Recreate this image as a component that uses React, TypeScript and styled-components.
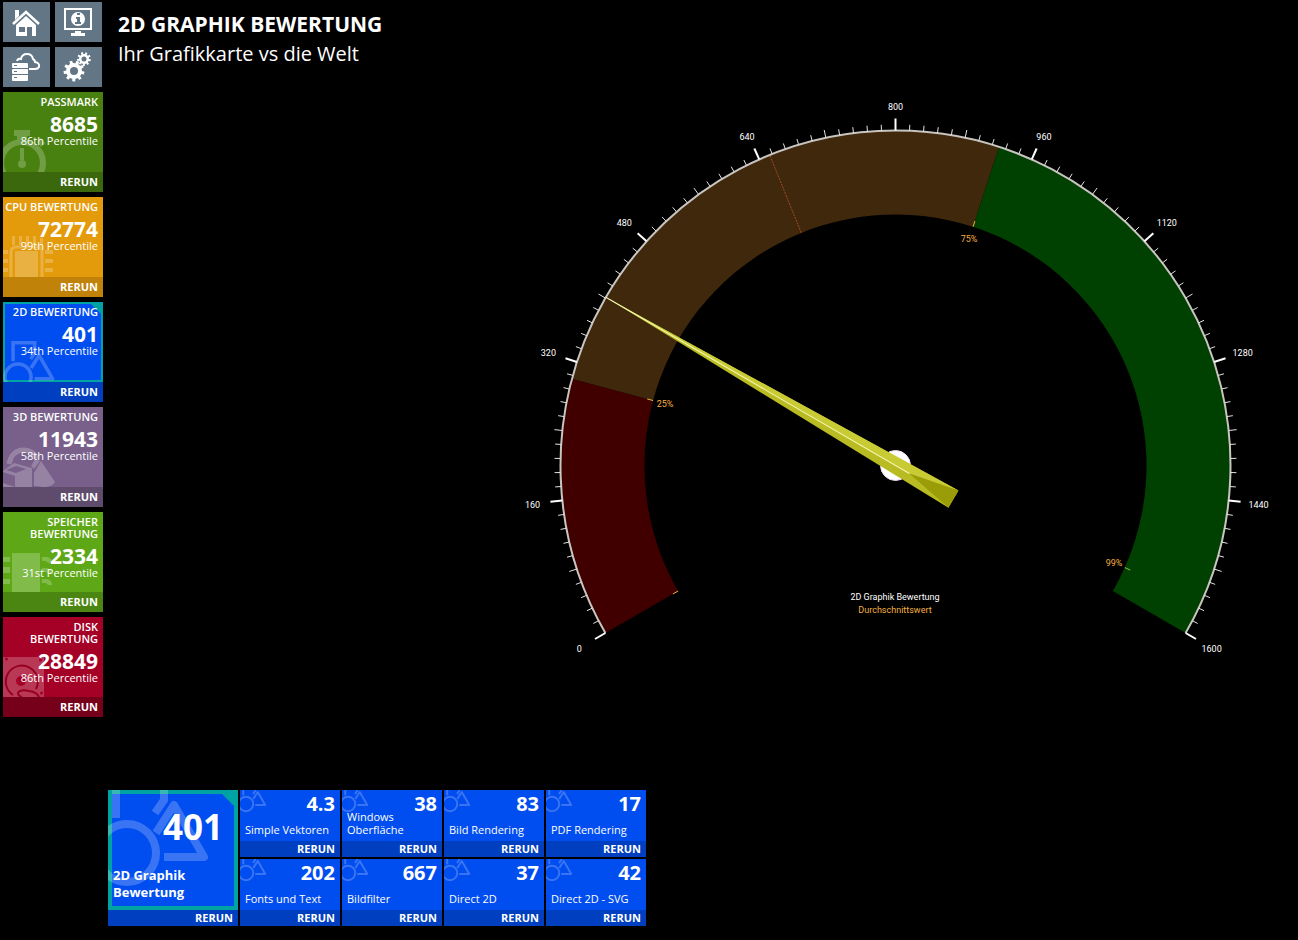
import React from "react";
import styled, { createGlobalStyle, css } from "styled-components";

const GlobalStyle = createGlobalStyle`
  * { box-sizing: border-box; }
  body {
    margin: 0;
    background: #000;
    color: #fff;
    font-family: "Open Sans", "Noto Sans", sans-serif;
  }
  button { font-family: inherit; color: inherit; border: 0; padding: 0; cursor: pointer; }
  a { color: inherit; text-decoration: none; }
  h1, h2, p { margin: 0; }
`;

const Page = styled.div`
  display: flex;
  gap: 5px;
  min-height: 100vh;
`;

const Sidebar = styled.nav`
  display: flex;
  flex-direction: column;
  flex: none;
  gap: 5px;
  width: 103px;
  padding: 2px 0 5px 3px;
`;

const Toolbar = styled.div`
  display: grid;
  grid-template-columns: 47px 47px;
  gap: 5px;
`;

const ToolButton = styled.button`
  display: flex;
  height: 40px;
  background: #627686;
  svg { width: 47px; height: 40px; }
`;

const Tile = styled.article`
  display: flex;
  flex-direction: column;
`;

const selectedFrame = css<{ $edge: number; $corner: number }>`
  &::before {
    content: "";
    position: absolute;
    inset: 0;
    border: ${(p) => p.$edge}px solid #00a3a3;
  }
  &::after {
    content: "";
    position: absolute;
    top: 0;
    right: 0;
    width: ${(p) => p.$corner}px;
    height: ${(p) => p.$corner}px;
    background: #00a3a3;
    clip-path: polygon(0 0, 100% 0, 100% 100%);
  }
`;

const TileBody = styled.a<{ $bg: string; $selected?: boolean; $edge: number; $corner: number }>`
  position: relative;
  display: flex;
  flex-direction: column;
  overflow: hidden;
  background: ${(p) => p.$bg};
  ${(p) => p.$selected && selectedFrame}
`;

const RatingBody = styled(TileBody)`
  height: 80px;
  padding: 4px 5px 0 0;
  text-align: right;
`;

const Backdrop = styled.svg`
  position: absolute;
  left: 0;
  top: 0;
  width: 60px;
  height: 80px;
  opacity: 0.22;
`;

const RatingLabel = styled.h2`
  position: relative;
  z-index: 1;
  font-size: 11px;
  font-weight: 600;
  line-height: 12px;
  white-space: pre-line;
`;

const RatingValue = styled.strong`
  position: relative;
  margin-top: 5px;
  font-size: 21px;
  font-weight: 700;
  line-height: 22px;
`;

const Percentile = styled.span`
  position: relative;
  font-size: 11px;
  line-height: 12px;
`;

const Rerun = styled.button<{ $bg: string; $height: number }>`
  height: ${(p) => p.$height}px;
  padding-right: 5px;
  background: ${(p) => p.$bg};
  font-size: 11px;
  font-weight: 700;
  line-height: ${(p) => p.$height}px;
  text-align: right;
`;

const Main = styled.main`
  display: flex;
  flex: 1;
  flex-direction: column;
  min-width: 0;
  padding: 9px 8px 14px 0;
`;

const Header = styled.header`
  padding-left: 10px;
`;

const Title = styled.h1`
  font-size: 21px;
  font-weight: 700;
  line-height: 30px;
`;

const Subtitle = styled.p`
  font-size: 20px;
  line-height: 30px;
`;

const GaugeArea = styled.section`
  display: flex;
  flex: 1;
  justify-content: flex-end;
  align-items: flex-start;
  padding: 21px 0 20px;
`;

const GaugeSvg = styled.svg`
  width: 100%;
  max-width: 790px;
  font-family: Roboto, "Noto Sans", sans-serif;
  font-size: 9px;
`;

const Tests = styled.section`
  display: flex;
  flex-wrap: wrap;
  gap: 2px;
`;

const TestGrid = styled.div`
  display: grid;
  grid-template-columns: repeat(4, 100px);
  gap: 2px;
`;

const SummaryTile = styled(Tile)`
  width: 130px;
`;

const SummaryBody = styled(TileBody)`
  height: 120px;
  justify-content: space-between;
  padding: 16px 15px 9px 5px;
`;

const SummaryValue = styled.strong`
  position: relative;
  font-size: 35px;
  line-height: 42px;
  text-align: right;
`;

const SummaryLabel = styled.span`
  position: relative;
  font-size: 13px;
  font-weight: 700;
  line-height: 17px;
  white-space: pre-line;
`;

const TestBody = styled(TileBody)`
  height: 51px;
  justify-content: space-between;
  padding: 3px 5px 5px;
`;

const TestValue = styled.strong`
  position: relative;
  height: 17px;
  font-size: 20px;
  line-height: 22px;
  text-align: right;
`;

const TestLabel = styled.span`
  position: relative;
  font-size: 11px;
  line-height: 13px;
  white-space: pre-line;
`;

const ShapesSvg = styled.svg<{ $x: number; $y: number; $w: number; $h: number }>`
  position: absolute;
  left: ${(p) => p.$x}px;
  top: ${(p) => p.$y}px;
  width: ${(p) => p.$w}px;
  height: ${(p) => p.$h}px;
  overflow: visible;
  opacity: 0.22;
`;

const SHAPES = (
  <g fill="none" stroke="#fff" strokeWidth="8">
    <path d="M9 45V4H57V27L48 40" strokeLinejoin="miter" />
    <circle cx="20" cy="80" r="29" />
    <path d="M49 60L67 32L97 84H57" strokeLinejoin="round" />
  </g>
);

function Shapes(props: { $x: number; $y: number; $w: number; $h: number }) {
  return (
    <ShapesSvg {...props} viewBox="0 0 100 112" aria-hidden="true">
      {SHAPES}
    </ShapesSvg>
  );
}

const Stopwatch = (
  <g fill="#fff">
    <circle cx="19" cy="71" r="21" fill="none" stroke="#fff" strokeWidth="6" />
    <path d="M11 38H27V44H24V49H14V44H11Z" />
    <path d="M34 50L38 46L42 51L38 55Z" />
    <path d="M17 56H21V68H17Z" />
    <circle cx="19" cy="72" r="4" />
  </g>
);

const Cpu = (
  <g fill="#fff">
    <path d="M12 54H35V80H12Z" />
    <path d="M8 80V55Q8 50 13 50H34Q39 50 39 55V80" fill="none" stroke="#fff" strokeWidth="3" />
    <path d="M9 39H12V48H9ZM16 39H19V48H16ZM23 39H26V48H23ZM30 39H33V48H30ZM37 41H40V49H37Z" />
    <path d="M0 53H5V57H0ZM0 62H5V66H0ZM0 71H5V75H0ZM42 53H50V57H42ZM42 62H50V66H42ZM42 71H50V75H42Z" />
  </g>
);

const Flat = <g transform="translate(6 39) scale(.45)">{SHAPES}</g>;

const Solids = (
  <g fill="#fff">
    <path d="M6 57Q9 43 21 43Q30 43 34 52" fill="none" stroke="#fff" strokeWidth="5" />
    <path d="M0 64L11 56L29 61V80H0V76L12 80V69L0 65ZM3 63L13 66L23 62L13 59Z" fillRule="evenodd" />
    <path d="M38 54L52 75Q50 80 40 80L31 79V66Z" />
    <path d="M32 52L37 54L31 62L28 59Z" />
  </g>
);

const Memory = (
  <g fill="#fff">
    <path d="M9 41H37V80H9Z" />
    <path d="M0 45H7V50H0ZM0 55H7V61H0ZM0 67H7V72H0Z" />
    <path d="M39 45H44Q49 46 49 51H45L43 49H39ZM39 56H44Q49 57 49 62H45L43 60H39ZM39 67H44Q49 68 49 73H45L43 71H39Z" />
  </g>
);

const Disk = (
  <g>
    <path
      fill="#fff"
      fillRule="evenodd"
      d="M0 40H41V80H0ZM2 42A1 1 0 1 0 5 42A1 1 0 1 0 2 42ZM36 43A1 1 0 1 0 39 43A1 1 0 1 0 36 43ZM37 76A1 1 0 1 0 40 76A1 1 0 1 0 37 76ZM13 64A5 5 0 1 0 23 64A5 5 0 1 0 13 64Z"
    />
    <path
      d="M33 72A16 16 0 1 0 10 78M36 80Q34 75 26 74Q17 72 15 76Q15 79 19 80"
      fill="none"
      stroke="#6b0012"
      strokeWidth="2"
    />
  </g>
);

function gearPath(cx: number, cy: number, outer: number, root: number, hole: number, teeth: number) {
  const step = (Math.PI * 2) / teeth;
  const at = (r: number, a: number) => `${(cx + r * Math.cos(a)).toFixed(2)} ${(cy + r * Math.sin(a)).toFixed(2)}`;
  let d = "";
  for (let i = 0; i < teeth; i++) {
    const a = i * step + 0.2;
    d += `${i ? "L" : "M"}${at(root, a - step * 0.27)}L${at(outer, a - step * 0.2)}L${at(outer, a + step * 0.2)}L${at(root, a + step * 0.27)}`;
  }
  return `${d}ZM${cx - hole} ${cy}a${hole} ${hole} 0 1 0 ${hole * 2} 0a${hole} ${hole} 0 1 0 ${-hole * 2} 0Z`;
}

const TOOLS = [
  {
    name: "Start",
    icon: (
      <>
        <path d="M12 8H16V14L12 18Z" />
        <path d="M10 22L23 10L36 22" fill="none" stroke="#fff" strokeWidth="2.5" />
        <path fillRule="evenodd" d="M13 23L23 14L33 23V34H13ZM16 25V30H22V25ZM24 25V34H29V25Z" />
      </>
    ),
  },
  {
    name: "Systeminformationen",
    icon: (
      <>
        <path d="M10 7H36V27H10Z" fill="none" stroke="#fff" strokeWidth="2" />
        <path d="M20 29H26V31H30V34H16V31H20Z" />
        <circle cx="23" cy="17" r="7" />
        <path fill="#627686" d="M22 11H25V13H22ZM21 15H25V20H26V22H20V20H22V17H21Z" />
      </>
    ),
  },
  {
    name: "Online-Ergebnisse",
    icon: (
      <>
        <path
          d="M14 14Q15 11 18 12Q19 7 24 7Q29 7 30 12Q32 13 32 15Q37 16 36 20Q35 22 32 22H26"
          fill="none"
          stroke="#fff"
          strokeWidth="2"
        />
        <path
          fillRule="evenodd"
          d="M10 16H24Q25 16 25 17V21H10Q9 21 9 20V17Q9 16 10 16ZM11 18V19H14V18ZM10 22H25V27H10Q9 27 9 26V23Q9 22 10 22ZM11 24V25H14V24ZM10 28H25V33Q25 34 24 34H10Q9 34 9 33V29Q9 28 10 28ZM11 30V31H14V30Z"
        />
      </>
    ),
  },
  {
    name: "Einstellungen",
    icon: (
      <>
        <path fillRule="evenodd" d={gearPath(19, 24, 10.5, 8, 4, 9)} />
        <path fillRule="evenodd" d={gearPath(29, 12, 7, 5, 2.5, 9)} />
      </>
    ),
  },
];

const RATINGS = [
  { label: "PASSMARK", value: "8685", pct: "86th Percentile", bg: "#498110", foot: "#3b680d", art: Stopwatch },
  { label: "CPU BEWERTUNG", value: "72774", pct: "99th Percentile", bg: "#e39b0b", foot: "#c08209", art: Cpu },
  { label: "2D BEWERTUNG", value: "401", pct: "34th Percentile", bg: "#004df0", foot: "#0040c0", art: Flat, selected: true },
  { label: "3D BEWERTUNG", value: "11943", pct: "58th Percentile", bg: "#78608a", foot: "#5f4c6d", art: Solids },
  { label: "SPEICHER\nBEWERTUNG", value: "2334", pct: "31st Percentile", bg: "#5ea817", foot: "#4b8612", art: Memory },
  { label: "DISK\nBEWERTUNG", value: "28849", pct: "86th Percentile", bg: "#a50026", foot: "#76001a", art: Disk },
];

const TESTS = [
  ["4.3", "Simple Vektoren"],
  ["38", "Windows\nOberfläche"],
  ["83", "Bild Rendering"],
  ["17", "PDF Rendering"],
  ["202", "Fonts und Text"],
  ["667", "Bildfilter"],
  ["37", "Direct 2D"],
  ["42", "Direct 2D - SVG"],
];

const CX = 895.5;
const CY = 465.5;
const OUTER = 335;
const INNER = 251;
const MAX = 1600;

const angleOf = (value: number) => ((value / MAX) * 240 - 120) * (Math.PI / 180);
const point = (value: number, r: number) => [CX + r * Math.sin(angleOf(value)), CY - r * Math.cos(angleOf(value))];

function band(from: number, to: number) {
  const large = ((to - from) / MAX) * 240 > 180 ? 1 : 0;
  return `M${point(from, OUTER)}A${OUTER} ${OUTER} 0 ${large} 1 ${point(to, OUTER)}L${point(to, INNER)}A${INNER} ${INNER} 0 ${large} 0 ${point(from, INNER)}Z`;
}

function Ray({ value, from, to, ...rest }: { value: number; from: number; to: number } & React.SVGProps<SVGLineElement>) {
  const [x1, y1] = point(value, from);
  const [x2, y2] = point(value, to);
  return <line {...rest} x1={x1} y1={y1} x2={x2} y2={y2} />;
}

function Gauge() {
  const ticks = Array.from({ length: 101 }, (_, i) => i);
  return (
    <GaugeSvg viewBox="500 90 790 580" role="img" aria-label="2D Graphik Bewertung 401">
      <path d={band(0, 300)} fill="#400000" />
      <path d={band(300, 920)} fill="#40280d" />
      <path d={band(920, MAX)} fill="#004000" />
      <Ray value={653} from={INNER} to={OUTER} stroke="#a04a24" strokeDasharray="2 1" />
      <path
        d={`M${point(0, OUTER)}A${OUTER} ${OUTER} 0 1 1 ${point(MAX, OUTER)}`}
        fill="none"
        stroke="#c8c4c0"
        strokeWidth="2"
      />
      {ticks.map((i) => (
        <Ray
          key={i}
          value={i * 16}
          from={OUTER}
          to={OUTER + (i % 10 === 0 ? 12 : i % 5 === 0 ? 8 : 6)}
          stroke={i % 10 === 0 ? "#fff" : "#e4e4e4"}
          strokeWidth={i % 10 === 0 ? 2 : 1}
        />
      ))}
      {ticks
        .filter((i) => i % 10 === 0)
        .map((i) => {
          const a = angleOf(i * 16);
          const ry = 360 + 7 * Math.sin(a) ** 2;
          return (
            <text key={i} x={CX + 365 * Math.sin(a)} y={CY - ry * Math.cos(a) + 4} fill="#fff" textAnchor="middle">
              {i * 16}
            </text>
          );
        })}
      {[0, 300, 920, 1560].map((v) => (
        <Ray key={v} value={v} from={INNER} to={INNER + 6} stroke={v === 1560 ? "#8fc050" : "#f0b040"} />
      ))}
      <g fill="#f5b041" textAnchor="middle">
        <text x="665" y="407">25%</text>
        <text x="969" y="242">75%</text>
        <text x="1114" y="566">99%</text>
        <text x="895" y="613">Durchschnittswert</text>
      </g>
      <text x="895" y="600" fill="#fff" textAnchor="middle">2D Graphik Bewertung</text>
      <circle cx={CX} cy={CY} r="15" fill="#fff" stroke="#f3d9f3" />
      <g transform={`translate(${CX} ${CY}) rotate(${(401 / MAX) * 240 - 120})`}>
        <path d="M0 -335L10 67H-10Z" fill="#b9bb22" />
        <path d="M0 -335L10 67L0 16Z" fill="#c9cb35" />
        <path d="M0 16L10 67H-10Z" fill="#9b9d08" />
        <path d="M0 -335V16" stroke="#f5f6b4" strokeWidth="1" />
      </g>
    </GaugeSvg>
  );
}

export default function App() {
  return (
    <Page>
      <GlobalStyle />
      <Sidebar>
        <Toolbar>
          {TOOLS.map((t) => (
            <ToolButton key={t.name} type="button" aria-label={t.name}>
              <svg viewBox="0 0 47 40" fill="#fff" aria-hidden="true">
                {t.icon}
              </svg>
            </ToolButton>
          ))}
        </Toolbar>
        {RATINGS.map((r) => (
          <Tile key={r.label}>
            <RatingBody href="#" $bg={r.bg} $selected={r.selected} $edge={2} $corner={14}>
              <Backdrop viewBox="0 0 60 80" aria-hidden="true">
                {r.art}
              </Backdrop>
              <RatingLabel>{r.label}</RatingLabel>
              <RatingValue>{r.value}</RatingValue>
              <Percentile>{r.pct}</Percentile>
            </RatingBody>
            <Rerun type="button" $bg={r.foot} $height={20}>
              RERUN
            </Rerun>
          </Tile>
        ))}
      </Sidebar>
      <Main>
        <Header>
          <Title>2D GRAPHIK BEWERTUNG</Title>
          <Subtitle>Ihr Grafikkarte vs die Welt</Subtitle>
        </Header>
        <GaugeArea>
          <Gauge />
        </GaugeArea>
        <Tests>
          <SummaryTile>
            <SummaryBody href="#" $bg="#004df0" $selected $edge={4} $corner={20}>
              <Shapes $x={-1} $y={-17} $w={100} $h={112} />
              <SummaryValue>401</SummaryValue>
              <SummaryLabel>{"2D Graphik\nBewertung"}</SummaryLabel>
            </SummaryBody>
            <Rerun type="button" $bg="#0040c0" $height={16}>
              RERUN
            </Rerun>
          </SummaryTile>
          <TestGrid>
            {TESTS.map(([value, label]) => (
              <Tile key={label}>
                <TestBody href="#" $bg="#004df0" $edge={0} $corner={0}>
                  <Shapes $x={1} $y={-6} $w={25} $h={28} />
                  <TestValue>{value}</TestValue>
                  <TestLabel>{label}</TestLabel>
                </TestBody>
                <Rerun type="button" $bg="#0040c0" $height={16}>
                  RERUN
                </Rerun>
              </Tile>
            ))}
          </TestGrid>
        </Tests>
      </Main>
    </Page>
  );
}
